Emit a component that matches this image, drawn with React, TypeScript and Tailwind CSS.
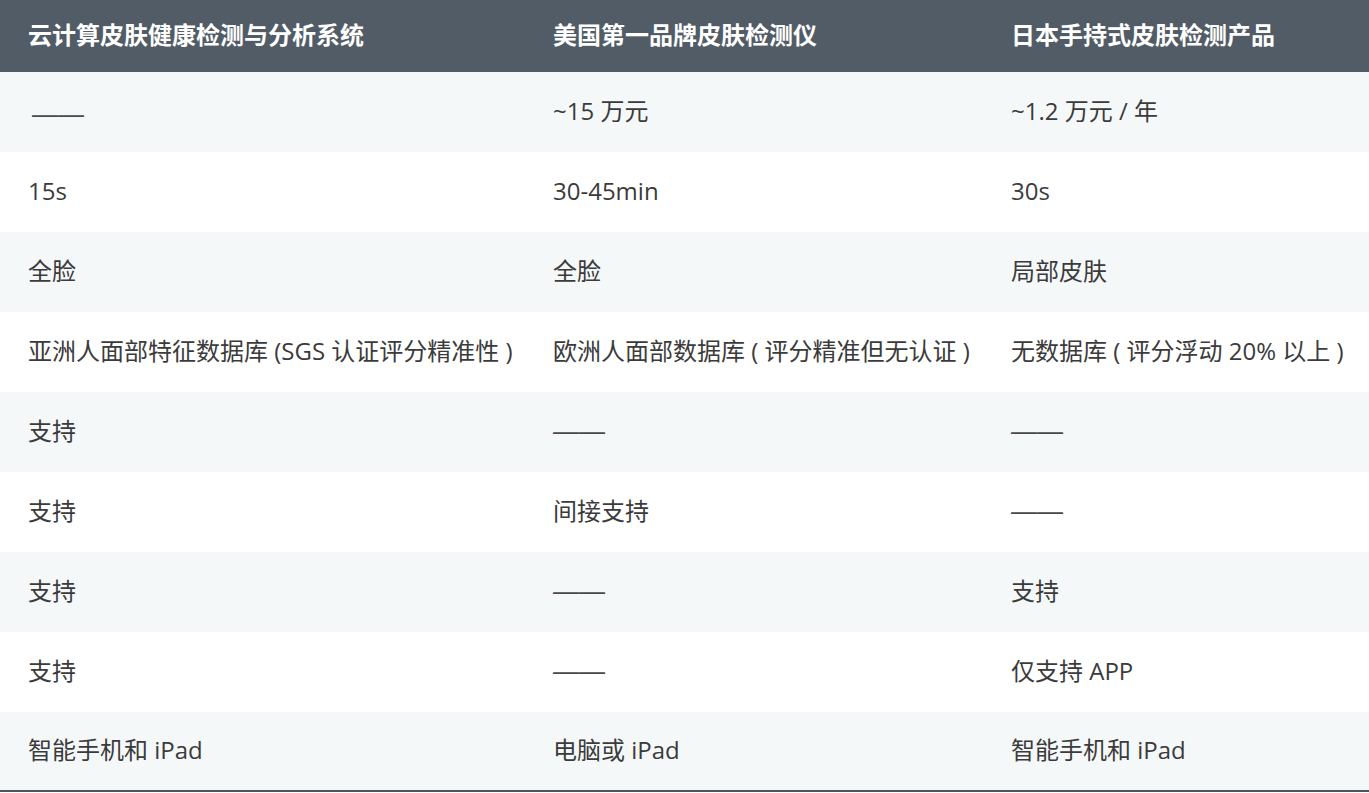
import React from 'react';

const headers = ['云计算皮肤健康检测与分析系统', '美国第一品牌皮肤检测仪', '日本手持式皮肤检测产品'];

const rows: string[][] = [
  ['——', '~15 万元', '~1.2 万元 / 年'],
  ['15s', '30-45min', '30s'],
  ['全脸', '全脸', '局部皮肤'],
  ['亚洲人面部特征数据库 (SGS 认证评分精准性 )', '欧洲人面部数据库 ( 评分精准但无认证 )', '无数据库 ( 评分浮动 20% 以上 )'],
  ['支持', '——', '——'],
  ['支持', '间接支持', '——'],
  ['支持', '——', '支持'],
  ['支持', '——', '仅支持 APP'],
  ['智能手机和 iPad', '电脑或 iPad', '智能手机和 iPad'],
];

export default function App() {
  return (
    <div
      className="w-[1369px] h-[793px] bg-white overflow-hidden"
      style={{ fontFamily: '"Open Sans", "Noto Sans CJK SC", sans-serif' }}
    >
      <div className="border-b-2 border-[#4b5661]">
        {/* Header */}
        <div className="grid grid-cols-[525px_458px_1fr] h-[72px] bg-[#525c66] text-white font-bold text-[24px]">
          {headers.map((h) => (
            <div key={h} className="flex items-center px-7 pb-[2px]">
              {h}
            </div>
          ))}
        </div>

        {/* Body */}
        {rows.map((r, i) => (
          <div
            key={i}
            className={`grid grid-cols-[525px_458px_1fr] ${i === rows.length - 1 ? 'h-[78px]' : 'h-[80px]'} ${
              i % 2 === 0 ? 'bg-[#f5f8f9]' : 'bg-white'
            } text-[#3b3b3b] text-[24px]`}
          >
            {r.map((c, j) => (
              <div key={j} className="flex items-center px-7 pb-[3px] whitespace-nowrap">
                {c === '——' ? (
                  <span
                    className={`font-['Liberation_Sans',sans-serif] text-[26px] leading-none text-[#4a4a4a] ${
                      i === 0 && j === 0 ? 'ml-1 mt-[7px]' : 'mt-[1px]'
                    }`}
                  >
                    {c}
                  </span>
                ) : (
                  c
                )}
              </div>
            ))}
          </div>
        ))}
      </div>
    </div>
  );
}
